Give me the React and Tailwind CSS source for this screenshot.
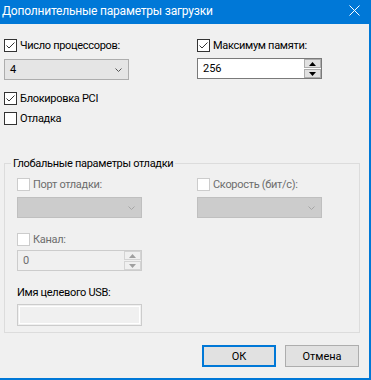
import React from "react";

function Check({ checked, disabled }) {
  return (
    <span
      className={
        "w-[13px] h-[13px] shrink-0 bg-white border flex items-center justify-center " +
        (disabled ? "border-[#cccccc]" : "border-[#333333]")
      }
    >
      {checked && (
        <svg width="11" height="11" viewBox="0 0 11 11">
          <polyline points="1.5,5.5 4,8 9.5,2.5" fill="none" stroke="#333333" strokeWidth="1" />
        </svg>
      )}
    </span>
  );
}

function CheckRow({ label, checked, disabled, className = "" }) {
  return (
    <div className={"flex items-center h-[13px] " + className}>
      <Check checked={checked} disabled={disabled} />
      <span
        className={
          "ml-[3px] text-[11px] tracking-[-0.3px] leading-none whitespace-nowrap " +
          (disabled ? "text-[#6d6d6d]" : "text-black")
        }
      >
        {label}
      </span>
    </div>
  );
}

function Chevron({ color }) {
  return (
    <svg width="7" height="4" viewBox="0 0 7 4">
      <polyline points="0.5,0.5 3.5,3.5 6.5,0.5" fill="none" stroke={color} strokeWidth="1" />
    </svg>
  );
}

function Select({ value, disabled }) {
  return (
    <div
      className={
        "w-[125px] h-[21px] border flex items-center justify-between pl-[5px] pr-[6px] " +
        (disabled ? "bg-[#cccccc] border-[#bfbfbf]" : "bg-[#e5e5e5] border-[#adadad]")
      }
    >
      <span className="text-[11px] text-black leading-none">{value}</span>
      <Chevron color={disabled ? "#a6a6a6" : "#555555"} />
    </div>
  );
}

function Spin({ disabled }) {
  const c = disabled ? "#a0a0a0" : "#000000";
  const b = disabled ? "border-[#d4d4d4] bg-[#f0f0f0]" : "border-[#adadad] bg-[#e1e1e1]";
  return (
    <div className="flex flex-col w-[17px] h-full gap-[1px]">
      <div className={"flex-1 border flex items-center justify-center " + b}>
        <svg width="7" height="4" viewBox="0 0 7 4">
          <polygon points="0,4 3.5,0 7,4" fill={c} />
        </svg>
      </div>
      <div className={"flex-1 border flex items-center justify-center " + b}>
        <svg width="7" height="4" viewBox="0 0 7 4">
          <polygon points="0,0 7,0 3.5,4" fill={c} />
        </svg>
      </div>
    </div>
  );
}

function SpinInput({ value, disabled }) {
  return (
    <div
      className={
        "w-[125px] h-[21px] border flex items-stretch " +
        (disabled ? "bg-[#f0f0f0] border-[#cccccc]" : "bg-white border-[#7a7a7a]")
      }
    >
      <span
        className={
          "flex-1 flex items-center pl-[5px] text-[11px] leading-none " +
          (disabled ? "text-[#6d6d6d]" : "text-black")
        }
      >
        {value}
      </span>
      <Spin disabled={disabled} />
    </div>
  );
}

export default function App() {
  return (
    <div className="w-[371px] h-[380px] bg-[#0078d7] flex flex-col overflow-hidden font-[Roboto,sans-serif]">
      <div className="h-[24px] shrink-0 flex items-center justify-between pl-[2px] pr-[11px] pb-[3px]">
        <span className="text-white text-[12px] tracking-[-0.2px] leading-none">
          Дополнительные параметры загрузки
        </span>
        <svg width="11" height="11" viewBox="0 0 11 11">
          <path d="M0.5 0.5 L10.5 10.5 M10.5 0.5 L0.5 10.5" stroke="white" strokeWidth="1" />
        </svg>
      </div>
      <div className="w-[369px] h-[354px] bg-[#f0f0f0] flex flex-col pl-[4px] pt-[15px]">
        <div className="flex">
          <div className="w-[125px] flex flex-col">
            <CheckRow label="Число процессоров:" checked />
            <div className="mt-[7px]">
              <Select value="4" />
            </div>
          </div>
          <div className="ml-[68px] w-[125px] flex flex-col">
            <CheckRow label="Максимум памяти:" checked />
            <div className="mt-[6px]">
              <SpinInput value="256" />
            </div>
          </div>
        </div>
        <CheckRow label="Блокировка PCI" checked className="mt-[12px]" />
        <CheckRow label="Отладка" className="mt-[7px]" />

        <div className="relative mt-[38px] w-[356px] h-[170px] border border-[#dcdcdc] pl-[12px] pt-[14px] flex flex-col">
          <span className="absolute left-[6px] top-[-7px] px-[2px] bg-[#f0f0f0] text-[11px] tracking-[-0.3px] leading-[13px] text-black whitespace-nowrap">
            Глобальные параметры отладки
          </span>
          <div className="flex">
            <div className="w-[125px] flex flex-col">
              <CheckRow label="Порт отладки:" disabled />
              <div className="mt-[6px]">
                <Select value="" disabled />
              </div>
            </div>
            <div className="ml-[55px] w-[125px] flex flex-col">
              <CheckRow label="Скорость (бит/с):" disabled />
              <div className="mt-[6px]">
                <Select value="" disabled />
              </div>
            </div>
          </div>
          <CheckRow label="Канал:" disabled className="mt-[15px]" />
          <div className="mt-[4px]">
            <SpinInput value="0" disabled />
          </div>
          <span className="mt-[16px] text-[11px] tracking-[-0.3px] leading-none text-black">
            Имя целевого USB:
          </span>
          <div className="mt-[6px] w-[125px] h-[22px] border border-[#cccccc] bg-[#f0f0f0] p-[1px]">
            <div className="w-full h-full border border-white"></div>
          </div>
        </div>

        <div className="flex justify-end pr-[10px] mt-[12px] gap-[9px]">
          <button className="w-[74px] h-[22px] border-2 border-[#0078d7] bg-[#e1e1e1] text-[11px] text-black leading-none">
            ОК
          </button>
          <button className="w-[74px] h-[22px] border border-[#adadad] bg-[#e1e1e1] text-[11px] text-black leading-none">
            Отмена
          </button>
        </div>
      </div>
    </div>
  );
}
